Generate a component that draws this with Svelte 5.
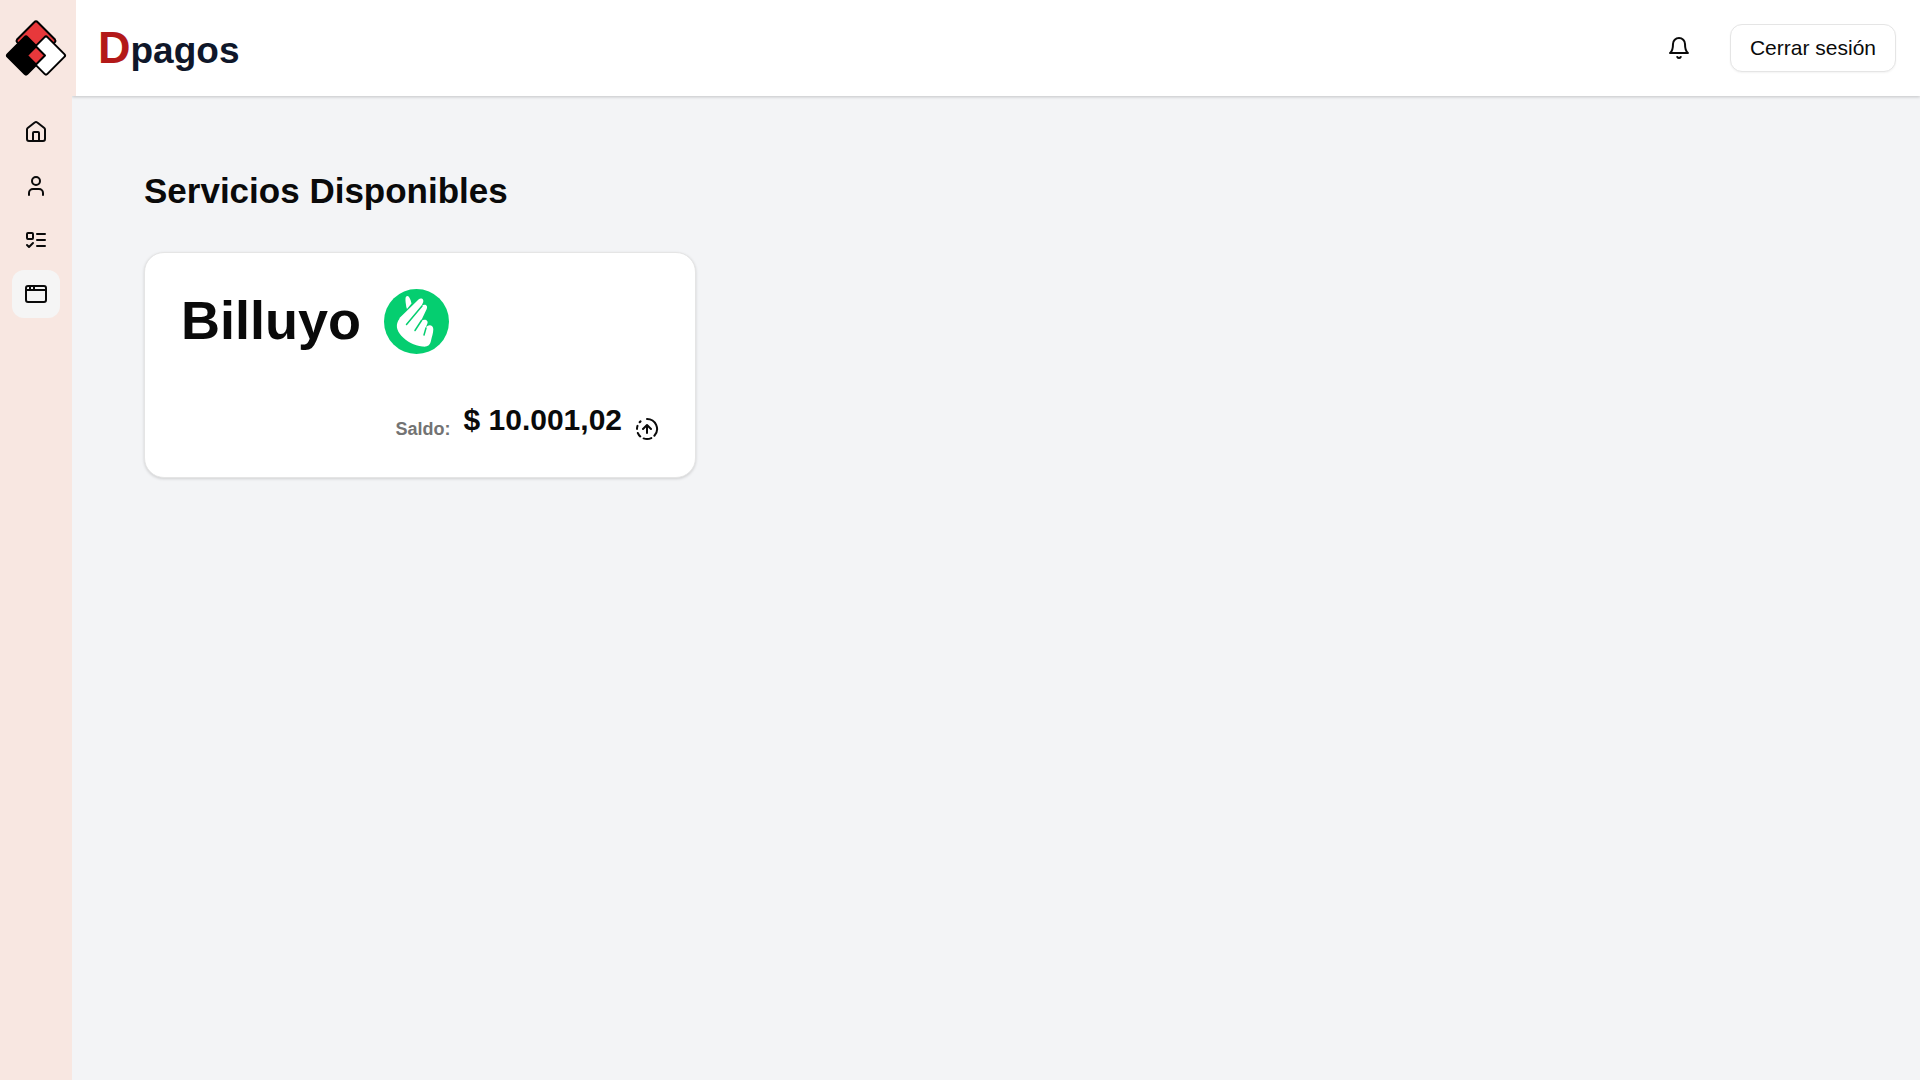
<script lang="ts">
	const links = [
		{ id: 'home', label: 'Inicio', active: false },
		{ id: 'user', label: 'Perfil', active: false },
		{ id: 'list', label: 'Actividad', active: false },
		{ id: 'window', label: 'Servicios', active: true }
	];

	const services = [{ name: 'Billuyo', balance: 10001.02 }];

	function formatBalance(value: number) {
		const [whole, cents] = value.toFixed(2).split('.');
		return `$ ${whole.replace(/\B(?=(\d{3})+$)/g, '.')},${cents}`;
	}
</script>

<div class="layout">
	<aside class="sidebar">
		<a href="/" class="logo" aria-label="Dpagos">
			<svg width="72" height="60" viewBox="0 0 72 60">
				<g stroke="#000" stroke-width="2" stroke-linejoin="round">
					<path d="M34.500 4a2 2 0 0 1 3 0L55 21.500a2 2 0 0 1 0 2.500L45 32H27L17 24a2 2 0 0 1 0-2.500z" fill="#e8383b" />
					<rect x="12" y="23.500" width="28" height="28" rx="2" transform="rotate(45 26 37.500)" fill="#000" />
					<rect x="32" y="23.500" width="28" height="28" rx="2" transform="rotate(45 46 37.500)" fill="#fff" />
					<path d="m36 28.500 9 9-9 9-9-9z" fill="#e8383b" />
				</g>
			</svg>
		</a>
		<nav>
			{#each links as link}
				<a href="/{link.id}" class="nav-link" class:active={link.active} aria-label={link.label}>
					<svg class="icon" viewBox="0 0 24 24">
						{#if link.id === 'home'}
							<path d="M9 21v-8a1 1 0 0 1 1-1h4a1 1 0 0 1 1 1v8" />
							<path d="M3 9.500a2 2 0 0 1 .7-1.500l7-5.500a2 2 0 0 1 2.600 0l7 5.500A2 2 0 0 1 21 9.500V19a2 2 0 0 1-2 2H5a2 2 0 0 1-2-2z" />
						{:else if link.id === 'user'}
							<circle cx="12" cy="7" r="4" />
							<path d="M19 21v-2a4 4 0 0 0-4-4H9a4 4 0 0 0-4 4v2" />
						{:else if link.id === 'list'}
							<rect x="3" y="5" width="6" height="6" rx="1" />
							<path d="m3 17 2 2 4-4M13 6h8M13 12h8M13 18h8" />
						{:else}
							<rect x="2" y="4" width="20" height="16" rx="2" />
							<path d="M10 4v4M2 8h20M6 4v4" />
						{/if}
					</svg>
				</a>
			{/each}
		</nav>
	</aside>

	<div class="content">
		<header>
			<a href="/" class="brand"><span>D</span>pagos</a>
			<div class="actions">
				<button class="bell" aria-label="Notificaciones">
					<svg class="icon" viewBox="0 0 24 24">
						<path d="M6 8a6 6 0 0 1 12 0c0 7 3 9 3 9H3s3-2 3-9" />
						<path d="M10.300 21a1.940 1.940 0 0 0 3.400 0" />
					</svg>
				</button>
				<button class="logout">Cerrar sesión</button>
			</div>
		</header>

		<main>
			<h1>Servicios Disponibles</h1>
			<div class="services">
				{#each services as service}
					<article class="card">
						<div class="card-title">
							<h2>{service.name}</h2>
							<svg width="65" height="65" viewBox="0 0 65 65">
								<circle cx="32.500" cy="32.500" r="32.500" fill="#05ce70" />
								<path
									d="M22.300 18C21.800 14 21.300 12 21.500 9.500c.3-2.800 2.500-3 3.500-1.500 1.300 1.800 2 4 2.500 6.500L23 20zM15.500 29 34.500 10.500c3-2.600 6.200.2 4.300 3.500L37.500 17c3.500-2.700 6.800-.5 5.200 3L37 32c4-2.700 7.800-.5 6.300 2.800l-1.800 4.200c2.500-4.200 7.800-3.200 7.800 1.200 0 4-1.600 8-2.300 11.500-.8 4.300-3.500 6.500-8.700 5.800-8-1-15.800-5-21-10.800-5-5.800-6-11.500-1.800-17z"
									fill="#fff"
								/>
								<path d="M22.500 35.500 38 17M31 41.500 37.500 31.500M40 46 42 39" stroke="#05ce70" stroke-width="1.500" stroke-linecap="round" fill="none" />
							</svg>
						</div>
						<div class="balance">
							<span class="label">Saldo:</span>
							<strong>{formatBalance(service.balance)}</strong>
							<button class="send" aria-label="Enviar">
								<svg class="icon" viewBox="0 0 24 24">
									<path d="M12 2a10 10 0 0 1 7.380 16.750M16 12l-4-4-4 4M12 16V8M2.500 8.875a10 10 0 0 0-.5 3M2.830 16a10 10 0 0 0 2.430 3.400M4.636 5.235a10 10 0 0 1 .891-.857M8.644 21.420a10 10 0 0 0 7.631-.380" />
								</svg>
							</button>
						</div>
					</article>
				{/each}
			</div>
		</main>
	</div>
</div>

<style>
	:global(body) {
		background-color: #f3f4f6;
		color: #0a0a0a;
		font-family: 'Liberation Sans', Arial, sans-serif;
	}

	.layout {
		display: flex;
		min-height: 100vh;
	}

	.sidebar {
		width: 72px;
		flex-shrink: 0;
		background-color: #f8e7e1;
	}

	.logo {
		display: flex;
		align-items: center;
		height: 96px;
	}

	nav {
		display: flex;
		flex-direction: column;
		align-items: center;
		gap: 6px;
		padding-top: 12px;
	}

	.nav-link {
		display: flex;
		align-items: center;
		justify-content: center;
		width: 48px;
		height: 48px;
		border-radius: 12px;
		color: inherit;
	}

	.nav-link.active {
		background-color: #f5f5f5;
	}

	.icon {
		width: 24px;
		height: 24px;
		fill: none;
		stroke: currentColor;
		stroke-width: 2;
		stroke-linecap: round;
		stroke-linejoin: round;
	}

	.content {
		flex: 1;
		min-width: 0;
	}

	header {
		display: flex;
		align-items: center;
		justify-content: space-between;
		height: 96px;
		padding: 0 24px 0 22px;
		box-sizing: border-box;
		border-left: 4px solid #f8e7e1;
		background-color: #fff;
		box-shadow: 0 1px 3px rgb(0 0 0 / 0.2);
		clip-path: inset(0 0 -6px 0);
	}

	.brand {
		color: #0f172a;
		font-size: 37px;
		font-weight: 700;
		text-decoration: none;
	}

	.brand span {
		color: #b31919;
		font-size: 45px;
	}

	.actions {
		display: flex;
		align-items: center;
		gap: 27px;
	}

	button {
		font: inherit;
		color: inherit;
		cursor: pointer;
	}

	.bell,
	.send {
		display: flex;
		align-items: center;
		justify-content: center;
		padding: 0;
		border: 0;
		background: none;
	}

	.bell {
		width: 48px;
		height: 48px;
	}

	.logout {
		height: 48px;
		padding: 0 19px;
		border: 1px solid #e5e5e5;
		border-radius: 12px;
		background-color: #fff;
		font-size: 21px;
		box-shadow: 0 1px 2px rgb(0 0 0 / 0.05);
	}

	main {
		padding: 72px;
	}

	h1 {
		margin: 0 0 38px;
		font-size: 35px;
		line-height: 46px;
	}

	.services {
		display: grid;
		grid-template-columns: repeat(3, 1fr);
		gap: 24px;
	}

	.card {
		padding: 36px;
		border: 1px solid #e5e5e5;
		border-radius: 20px;
		background-color: #fff;
		box-shadow: 0 1px 3px rgb(0 0 0 / 0.15);
	}

	.card-title {
		display: flex;
		align-items: flex-start;
		gap: 23px;
	}

	h2 {
		margin: 0;
		font-size: 54px;
		line-height: 62px;
	}

	.balance {
		display: flex;
		align-items: flex-end;
		justify-content: flex-end;
		gap: 13px;
		margin-top: 45px;
	}

	.label {
		color: #737373;
		font-size: 18px;
		font-weight: 700;
		line-height: 24px;
	}

	.balance strong {
		font-size: 30px;
		line-height: 42px;
	}
</style>
